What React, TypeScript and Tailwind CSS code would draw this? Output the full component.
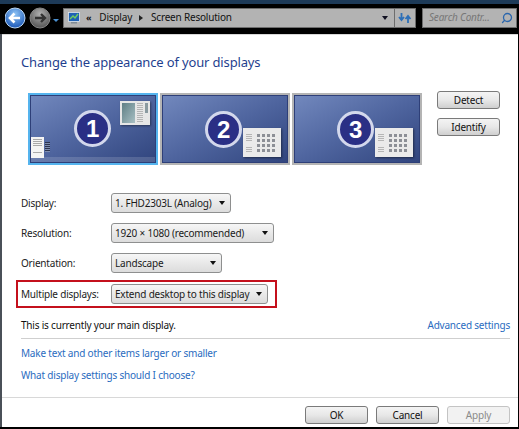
import { Search } from 'lucide-react';

function Caret() {
  return <span className="ml-auto h-0 w-0 shrink-0 border-x-[3.5px] border-t-[4px] border-x-transparent border-t-[#111]" />;
}

function Select({ value, width }: { value: string; width: string }) {
  return (
    <div className={`flex h-[20px] items-center rounded-[3px] border border-[#8e8f8f] bg-gradient-to-b from-[#f6f6f6] to-[#dcdcdc] pl-[3px] pr-[5px] text-[#1a1a1a] ${width}`}>
      <span className="whitespace-nowrap">{value}</span>
      <Caret />
    </div>
  );
}

function Row({ label, value, width }: { label: string; value: string; width: string }) {
  return (
    <div className="flex h-[20px] items-center">
      <span className="w-[90px] text-[#222]">{label}</span>
      <Select value={value} width={width} />
    </div>
  );
}

function Button({ label, disabled }: { label: string; disabled?: boolean }) {
  return (
    <div
      className={`flex h-[18px] w-[63px] items-center justify-center rounded-[3px] border ${
        disabled
          ? 'border-[#c4c4c4] bg-[#f2f2f2] text-[#8a8a8a]'
          : 'border-[#7a7a7a] bg-gradient-to-b from-[#f4f4f4] via-[#e8e8e8] to-[#cfcfcf] text-[#111]'
      }`}
    >
      {label}
    </div>
  );
}

function Badge({ n }: { n: number }) {
  return (
    <div className="flex h-[37px] w-[37px] items-center justify-center rounded-full border-[3px] border-[#d3d8ec] bg-[#2a2f85] font-['Liberation_Sans',sans-serif] text-[24px] font-bold leading-none text-white">
      {n}
    </div>
  );
}

function GridWindow() {
  return (
    <div className="absolute right-[7px] top-[33px] flex h-[29px] w-[38px] items-center gap-[5px] bg-[#eaeaea] pl-[3px] shadow-[1px_1px_2px_rgba(0,0,0,0.45)]">
      <div className="flex flex-col gap-[5px]">
        <div className="h-[8px] w-[6px] bg-[repeating-linear-gradient(#b5b5b5_0_1px,transparent_1px_2px)]" />
        <div className="h-[5px] w-[6px] bg-[repeating-linear-gradient(#b5b5b5_0_1px,transparent_1px_2px)]" />
      </div>
      <div className="grid grid-cols-4 gap-[2px]">
        {Array.from({ length: 16 }).map((_, i) => (
          <div key={i} className="h-[3px] w-[3px] bg-[#8c8f96]" />
        ))}
      </div>
    </div>
  );
}

function Monitor({ n, selected }: { n: number; selected?: boolean }) {
  return (
    <div
      className={`relative h-[72px] w-[130px] border-[2px] ${
        selected ? 'border-[#55b4ee]' : 'border-[#b4b4b4]'
      }`}
    >
      <div className="h-full w-full border border-[#2e3f78] bg-gradient-to-br from-[#7288bd] via-[#4f659f] to-[#31457e]" />
      {selected ? (
        <>
          <div className="absolute left-[44px] top-[15px]">
            <Badge n={n} />
          </div>
          <div className="absolute right-[6px] top-[6px] flex h-[24px] w-[30px] gap-[2px] bg-[#e6e6e6] p-[2px] shadow-[1px_1px_2px_rgba(0,0,0,0.4)]">
            <div className="h-full w-[14px] bg-gradient-to-br from-[#5f7f85] to-[#a9c0c4]" />
            <div className="h-full w-[6px] bg-[repeating-linear-gradient(#b5b5b5_0_1px,transparent_1px_2px)]" />
            <div className="h-[10px] w-[3px] bg-[#8a9aa0]" />
          </div>
          <div className="absolute inset-x-[1px] bottom-[1px] h-[5px] bg-white/15" />
          <div className="absolute bottom-[5px] left-[1px] flex h-[21px]">
            <div className="flex h-full w-[13px] flex-col gap-[2px] bg-[#f4f4f4] p-[2px]">
              <div className="h-[8px] bg-[repeating-linear-gradient(#a9a9a9_0_1px,transparent_1px_2px)]" />
              <div className="mt-[3px] h-px bg-[#a9a9a9]" />
            </div>
            <div className="ml-px mt-[5px] h-[10px] w-[5px] bg-[repeating-linear-gradient(#2c3550_0_1px,#7f8db0_1px_2px)]" />
          </div>
        </>
      ) : (
        <>
          <div className="absolute left-[43px] top-[16px]">
            <Badge n={n} />
          </div>
          <GridWindow />
        </>
      )}
    </div>
  );
}

export default function App() {
  return (
    <div className="flex h-[429px] w-[519px] flex-col overflow-hidden bg-white font-['Noto_Sans',sans-serif] text-[10px] tracking-[-0.2px]">
      {/* explorer chrome */}
      <div className="h-[4px] bg-[#1d3a58]" />
      <div className="flex h-[30px] items-center bg-black pb-[3px] pl-[5px] pr-[2px]">
        <svg width="54" height="24" viewBox="0 0 54 24" className="shrink-0">
          <defs>
            <radialGradient id="b" cx="50%" cy="30%" r="70%">
              <stop offset="0%" stopColor="#8fc4f5" />
              <stop offset="100%" stopColor="#1b58b8" />
            </radialGradient>
            <radialGradient id="g" cx="50%" cy="30%" r="70%">
              <stop offset="0%" stopColor="#b0b0b0" />
              <stop offset="100%" stopColor="#555" />
            </radialGradient>
          </defs>
          <circle cx="35" cy="12" r="10" fill="url(#g)" stroke="#888" />
          <path d="M30 12h9M36 8l4 4-4 4" stroke="#333" strokeWidth="2.4" fill="none" />
          <circle cx="10" cy="12" r="10" fill="url(#b)" stroke="#bcd8f5" />
          <path d="M15 12H6M9.5 7.5 5 12l4.5 4.5" stroke="#fff" strokeWidth="2.6" fill="none" />
          <path d="M48 13h6l-3 3z" fill="#4a8fd0" />
        </svg>
        <div className="ml-[4px] flex h-[20px] w-[332px] items-center border border-[#6d6d6d] bg-[#b3b3b3] pl-[4px] pr-[6px] text-[#111]">
          <svg width="12" height="12" viewBox="0 0 12 12" className="shrink-0">
            <rect x="0.5" y="0.5" width="11" height="9" fill="#1f62b5" stroke="#dfe6ee" strokeWidth="0.8" />
            <path d="M2 7l3-3 2 2 3-4" stroke="#6fce5e" strokeWidth="1.4" fill="none" />
            <rect x="3" y="10" width="6" height="1.5" fill="#7f8a94" />
          </svg>
          <span className="ml-[6px] text-[9px] font-bold leading-none">«</span>
          <span className="ml-[8px]">Display</span>
          <span className="ml-[7px] h-0 w-0 border-y-[3px] border-l-[4px] border-y-transparent border-l-[#222]" />
          <span className="ml-[8px]">Screen Resolution</span>
          <span className="ml-auto h-0 w-0 border-x-[3.5px] border-t-[4px] border-x-transparent border-t-[#111122]" />
        </div>
        <div className="flex h-[20px] w-[21px] items-center justify-center border border-l-0 border-[#6d6d6d] bg-[#b3b3b3]">
          <svg width="14" height="12" viewBox="0 0 14 12" fill="none" strokeWidth="1.8">
            <path d="M3.5 1v6M1 5l2.5 3L6 5" stroke="#2c6fb8" />
            <path d="M10 11V5M7.5 7L10 4l2.5 3" stroke="#2c6fb8" />
          </svg>
        </div>
        <div className="ml-[6px] flex h-[20px] flex-1 items-center border border-[#6d6d6d] bg-[#b3b3b3] pl-[6px] pr-[3px]">
          <span className="italic text-[#777]">Search Contr...</span>
          <Search className="ml-auto h-[12px] w-[12px] -scale-x-100 text-[#2a66ad]" strokeWidth={2.6} />
        </div>
      </div>

      {/* window body */}
      <div className="flex flex-1 flex-col border-l-[2px] border-r border-[#4a5058] border-r-black">
        <div className="h-px bg-[#d8d8d8]" />
        <div className="flex flex-1 flex-col pl-[19px] pr-[8px]">
          <h1 className="mt-[17px] h-[20px] text-[13px] leading-[20px] tracking-[-0.15px] text-[#1f3f8f]">
            Change the appearance of your displays
          </h1>
          <div className="mt-[20px] flex h-[73px] items-start">
            <div className="ml-[7px] mt-px flex gap-[2px]">
              <Monitor n={1} selected />
              <Monitor n={2} />
              <Monitor n={3} />
            </div>
            <div className="ml-[15px] mt-[-1px] flex flex-col gap-[9px]">
              <Button label="Detect" />
              <Button label="Identify" />
            </div>
          </div>
          <div className="mt-[28px] flex flex-col gap-[10px]">
            <Row label="Display:" value="1. FHD2303L (Analog)" width="w-[120px]" />
            <Row label="Resolution:" value="1920 × 1080 (recommended)" width="w-[163px]" />
            <Row label="Orientation:" value="Landscape" width="w-[111px]" />
            <div className="-mx-[5px] -my-[3px] flex h-[28px] w-[261px] items-center border-[2px] border-[#c4101c] pl-[3px]">
              <span className="w-[90px] text-[#222]">Multiple displays:</span>
              <Select value="Extend desktop to this display" width="w-[157px]" />
            </div>
          </div>
          <div className="mt-[12px] flex h-[16px] items-center justify-between">
            <span className="text-[#111]">This is currently your main display.</span>
            <span className="text-[#2a6cc0]">Advanced settings</span>
          </div>
          <div className="mt-[5px] h-px bg-[#cfcfcf]" />
          <div className="mt-[7px] text-[#2a6cc0]">Make text and other items larger or smaller</div>
          <div className="mt-[7px] text-[#2a6cc0]">What display settings should I choose?</div>
        </div>
        <div className="h-px bg-[#d8d8d8]" />
        <div className="flex h-[29px] items-end justify-end gap-[8px] pb-[3px] pr-[8px]">
          <Button label="OK" />
          <Button label="Cancel" />
          <Button label="Apply" disabled />
        </div>
      </div>
      <div className="h-[2px] bg-black" />
    </div>
  );
}
